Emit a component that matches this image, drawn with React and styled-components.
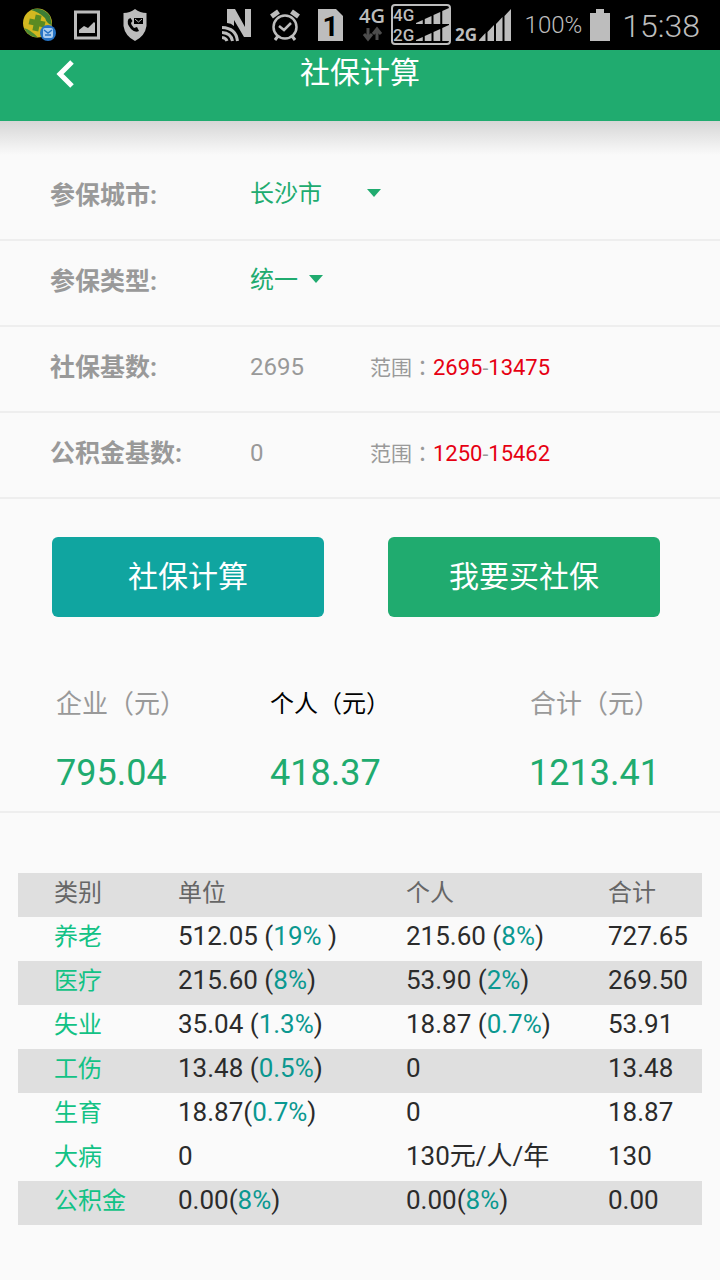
import React from "react";
import styled, { createGlobalStyle } from "styled-components";

const green = "#20ab6f";
const teal = "#10a5a0";
const ink = "#bdbdbd";

const GlobalStyle = createGlobalStyle`
  *, *::before, *::after { box-sizing: border-box; }
  body {
    margin: 0;
    background: #fafafa;
    color: #999;
    font-family: Roboto, "Noto Sans CJK SC", sans-serif;
    font-size: 24px;
  }
  button, input, select { font: inherit; color: inherit; }
`;

const StatusBar = styled.div`
  display: flex;
  align-items: center;
  justify-content: space-between;
  height: 50px;
  padding: 0 20px 0 22px;
  background: #000;
  color: ${ink};
`;

const StatusGroup = styled.div`
  display: flex;
  align-items: center;
  gap: ${(p) => p.$gap}px;
`;

const Icon = styled.svg`
  display: block;
  flex: none;
`;

const Battery = styled.span`
  font-size: 24px;
  font-weight: 300;
  line-height: 50px;
  margin-left: 5px;
`;

const Clock = styled.time`
  font-size: 32px;
  font-weight: 300;
  line-height: 50px;
  padding-top: 2px;
  margin-left: 4px;
`;

const Header = styled.header`
  display: grid;
  grid-template-columns: 80px 1fr 80px;
  height: 71px;
  padding-bottom: 27px;
  background: ${green};
  color: #fff;
`;

const BackButton = styled.button`
  display: flex;
  align-items: center;
  justify-content: flex-end;
  border: 0;
  padding: 2px 5px 0 0;
  background: none;
`;

const Title = styled.h1`
  margin: 0;
  font-size: 30px;
  font-weight: 400;
  line-height: 46px;
  text-align: center;
`;

const HeaderShade = styled.div`
  height: 34px;
  background: linear-gradient(#d6d6d6, #fafafa);
`;

const Row = styled.div`
  display: flex;
  align-items: center;
  height: 86px;
  padding: 0 50px 8px;
  border-bottom: 2px solid #eee;
`;

const Label = styled.label`
  flex: none;
  width: 200px;
  font-size: 25px;
  font-weight: 700;
`;

const Picker = styled.div`
  display: flex;
  align-items: center;
  color: ${green};
`;

const Select = styled.select`
  appearance: none;
  border: 0;
  padding: 2px 0 0;
  background: none;
  font-size: 24px;
  min-width: ${(p) => p.$min}px;
`;

const NumberInput = styled.input`
  width: 120px;
  border: 0;
  padding: 4px 0 0;
  background: none;
`;

const Range = styled.span`
  padding-top: 2px;
  font-size: 21px;
`;

const Wide = styled.span`
  font-family: "Noto Sans CJK TC", sans-serif;
`;

const Limit = styled.span`
  color: #e60012;
  font-size: 22px;
`;

const Actions = styled.div`
  display: flex;
  gap: 64px;
  padding: 38px 60px 0 52px;
`;

const Action = styled.button`
  flex: 1;
  height: 80px;
  border: 0;
  border-radius: 6px;
  padding: 0 0 6px;
  background: ${(p) => p.$color};
  color: #fff;
  font-size: 30px;
`;

const Summary = styled.dl`
  display: grid;
  grid-template-columns: 214px 1fr auto;
  margin: 0;
  padding: 67px 60px 17px 56px;
  border-bottom: 2px solid #eee;
`;

const Total = styled.div`
  &:last-child { text-align: right; }
`;

const Caption = styled.dt`
  font-size: ${(p) => (p.$strong ? 24 : 26)}px;
  line-height: 40px;
  color: ${(p) => (p.$strong ? "#000" : "#999")};
`;

const Amount = styled.dd`
  margin: 28px 0 0;
  font-size: 36px;
  line-height: 42px;
  color: ${green};
`;

const TableArea = styled.main`
  padding: 60px 18px 55px;
`;

const Table = styled.table`
  width: 100%;
  table-layout: fixed;
  border-collapse: collapse;
  color: #2b2b2b;
`;

const Col = styled.col`
  width: ${(p) => p.$width};
`;

const Line = styled.tr`
  height: 44px;
  background: ${(p) => (p.$shaded ? "#dfdfdf" : "transparent")};
`;

const Head = styled.th`
  padding: 0 0 4px;
  text-align: left;
  font-size: 24px;
  font-weight: 400;
  line-height: 40px;
  color: ${(p) => (p.scope === "row" ? "#12c285" : "#666")};
  &:first-child { padding-left: 36px; }
`;

const Cell = styled.td`
  padding: 0 0 6px;
  font-size: 26px;
  line-height: 38px;
  white-space: nowrap;
`;

const Rate = styled.span`
  color: #0b9890;
`;

function Caret() {
  return (
    <Icon width="16" height="10" viewBox="0 0 16 10" aria-hidden="true">
      <path d="M1 1H15L8 9Z" fill={green} />
    </Icon>
  );
}

function Bars({ x, y, w, h }) {
  const gap = 2;
  const step = w / 4;
  return [0, 1, 2, 3].map((i) => {
    const a = x + i * step;
    const b = a + step - gap;
    const topA = y + h - (h * i) / 4 - 1;
    const topB = y + h - (h * (i + 1)) / 4;
    return <path key={i} d={`M${a} ${y + h}V${topA}L${b} ${topB}V${y + h}Z`} fill={ink} />;
  });
}

const svgText = { fontFamily: '"Open Sans", sans-serif', fontWeight: 600, fill: ink };
const boxText = { fontFamily: "Roboto, sans-serif", fontWeight: 500, fontSize: 17, fill: ink };

function StatusIcons() {
  return (
    <StatusBar>
      <StatusGroup $gap={18}>
        <Icon width="34" height="34" viewBox="0 0 34 34">
          <circle cx="15.5" cy="15" r="14.5" fill="#d3b820" />
          <path d="M9 2Q20-2 28 8L30 17Q25 16 23 10Q17 4 9 2Z" fill="#3c7d35" />
          <path d="M2 20Q9 22 16 29.500Q6 29 2 20Z" fill="#4f8c34" />
          <path d="M12 7h6v5h5v6h-5v5h-6v-5H7v-6h5Z" fill="#5a8a22" transform="rotate(12 15 15)" />
          <circle cx="26" cy="25" r="8" fill="#2673c4" />
          <rect x="21" y="20" width="10" height="10" rx="2" fill="#a9cdf0" />
          <path d="M22 22L26 25L30 22M23 27H29" fill="none" stroke="#2673c4" strokeWidth="1.5" />
        </Icon>
        <Icon width="26" height="30" viewBox="0 0 26 30">
          <rect x="1.5" y="2" width="23" height="26" fill="none" stroke={ink} strokeWidth="3" />
          <path d="M5 23V20L10 16L14 18L20 12L21 13V23Z" fill={ink} />
        </Icon>
        <Icon width="34" height="32" viewBox="0 0 34 32">
          <path d="M17 0Q22 4 28.500 4V17Q27 27 17 32Q7 27 5.500 17V4Q12 4 17 0Z" fill={ink} />
          <path d="M10.500 10Q8 14 13 20Q17 24 21 22L19 18L16 19Q13 16 13 14L14.500 12L12.500 9Z" fill="#000" />
          <rect x="16" y="9" width="9" height="6" fill="#000" />
          <path d="M17 10L20.500 13L24 10" fill="none" stroke={ink} />
        </Icon>
      </StatusGroup>
      <StatusGroup $gap={8}>
        <StatusGroup $gap={18}>
          <Icon width="30" height="34" viewBox="0 0 30 34">
            <path d="M5 15V1H13L23 19V1H29V29H22L12 12V18Q9 15 5 15Z" fill={ink} />
            <g fill="none" stroke={ink} strokeWidth="3">
              <path d="M0 19.500Q14 20 15.500 33" />
              <path d="M0 24.500Q9 25 10.500 33" />
              <path d="M0 29.500Q4 30 5 33" />
            </g>
          </Icon>
          <Icon width="30" height="32" viewBox="0 0 30 32">
            <circle cx="15" cy="18" r="11.500" fill="none" stroke={ink} strokeWidth="2.500" />
            <path d="M9 17L14 21L21 14" fill="none" stroke={ink} strokeWidth="2.500" />
            <path d="M1.500 7.500L8.500 2.500M28.500 7.500L21.500 2.500" fill="none" stroke={ink} strokeWidth="5" />
            <path d="M8 27L5 31M22 27L25 31" stroke={ink} strokeWidth="3" />
          </Icon>
          <Icon width="25" height="32" viewBox="0 0 25 32">
            <path d="M0 0H18L25 7V32H0Z" fill={ink} />
            <text x="12.500" y="27" textAnchor="middle" fontFamily="Roboto, sans-serif" fontWeight="700" fontSize="28" fill="#000">1</text>
          </Icon>
        </StatusGroup>
        <StatusGroup $gap={4}>
          <Icon width="36" height="50" viewBox="0 0 36 50">
            <text x="8" y="23" fontSize="20" {...svgText}>4G</text>
            <path d="M17 28V38M13 34L17 39L21 34M26 40V29M22 34L26 29L30 34" fill="none" stroke="#4c4c4c" strokeWidth="3" />
          </Icon>
          <Icon width="60" height="50" viewBox="0 0 60 50">
            <rect x="1" y="5" width="58" height="39" rx="3" fill="none" stroke={ink} strokeWidth="2" />
            <text x="2" y="21" {...boxText}>4G</text>
            <text x="2" y="41" {...boxText}>2G</text>
            <Bars x={25} y={8} w={35} h={16} />
            <Bars x={25} y={25} w={35} h={16} />
          </Icon>
          <Icon width="57" height="50" viewBox="0 0 57 50">
            <text x="0" y="41" fontSize="17" {...svgText} fontWeight="700">2G</text>
            <Bars x={24} y={9} w={34} h={32} />
          </Icon>
        </StatusGroup>
        <Battery>100%</Battery>
        <Icon width="20" height="32" viewBox="0 0 20 32">
          <path d="M6 0H14V4H20V32H0V4H6Z" fill={ink} />
        </Icon>
        <Clock>15:38</Clock>
      </StatusGroup>
    </StatusBar>
  );
}

const fields = [
  { id: "base", label: "社保基数:", value: "2695", min: "2695", max: "13475" },
  { id: "fund", label: "公积金基数:", value: "0", min: "1250", max: "15462" },
];

const totals = [
  { caption: "企业（元）", amount: "795.04" },
  { caption: "个人（元）", amount: "418.37", strong: true },
  { caption: "合计（元）", amount: "1213.41" },
];

const lines = [
  { name: "养老", unit: ["512.05 (", "19%", " )"], own: ["215.60 (", "8%", ")"], total: "727.65" },
  { name: "医疗", unit: ["215.60 (", "8%", ")"], own: ["53.90 (", "2%", ")"], total: "269.50", shaded: true },
  { name: "失业", unit: ["35.04 (", "1.3%", ")"], own: ["18.87 (", "0.7%", ")"], total: "53.91" },
  { name: "工伤", unit: ["13.48 (", "0.5%", ")"], own: ["0"], total: "13.48", shaded: true },
  { name: "生育", unit: ["18.87(", "0.7%", ")"], own: ["0"], total: "18.87" },
  { name: "大病", unit: ["0"], own: ["130元/人/年"], total: "130" },
  { name: "公积金", unit: ["0.00(", "8%", ")"], own: ["0.00(", "8%", ")"], total: "0.00", shaded: true },
];

function Share({ parts }) {
  const [before, rate, after] = parts;
  return (
    <Cell>
      {before}
      {rate && <Rate>{rate}</Rate>}
      {after}
    </Cell>
  );
}

export default function App() {
  return (
    <>
      <GlobalStyle />
      <StatusIcons />
      <Header>
        <BackButton type="button" aria-label="返回">
          <Icon width="19" height="28" viewBox="0 0 19 28">
            <path d="M16 2L4 14L16 26" fill="none" stroke="#fff" strokeWidth="5" />
          </Icon>
        </BackButton>
        <Title>社保计算</Title>
      </Header>
      <HeaderShade />
      <form onSubmit={(e) => e.preventDefault()}>
        <Row>
          <Label htmlFor="city">参保城市:</Label>
          <Picker>
            <Select id="city" $min={116}>
              <option>长沙市</option>
            </Select>
            <Caret />
          </Picker>
        </Row>
        <Row>
          <Label htmlFor="kind">参保类型:</Label>
          <Picker>
            <Select id="kind" $min={58}>
              <option>统一</option>
            </Select>
            <Caret />
          </Picker>
        </Row>
        {fields.map((f) => (
          <Row key={f.id}>
            <Label htmlFor={f.id}>{f.label}</Label>
            <NumberInput id={f.id} inputMode="numeric" defaultValue={f.value} />
            <Range>
              范围<Wide lang="zh-TW">：</Wide>
              <Limit>{f.min}</Limit>-<Limit>{f.max}</Limit>
            </Range>
          </Row>
        ))}
        <Actions>
          <Action type="submit" $color={teal}>社保计算</Action>
          <Action type="button" $color={green}>我要买社保</Action>
        </Actions>
      </form>
      <Summary>
        {totals.map((t) => (
          <Total key={t.caption}>
            <Caption $strong={t.strong}>{t.caption}</Caption>
            <Amount>{t.amount}</Amount>
          </Total>
        ))}
      </Summary>
      <TableArea>
        <Table>
          <colgroup>
            <Col $width="160px" />
            <Col $width="228px" />
            <Col $width="auto" />
            <Col $width="94px" />
          </colgroup>
          <thead>
            <Line $shaded>
              <Head scope="col">类别</Head>
              <Head scope="col">单位</Head>
              <Head scope="col">个人</Head>
              <Head scope="col">合计</Head>
            </Line>
          </thead>
          <tbody>
            {lines.map((l) => (
              <Line key={l.name} $shaded={l.shaded}>
                <Head scope="row">{l.name}</Head>
                <Share parts={l.unit} />
                <Share parts={l.own} />
                <Cell>{l.total}</Cell>
              </Line>
            ))}
          </tbody>
        </Table>
      </TableArea>
    </>
  );
}
